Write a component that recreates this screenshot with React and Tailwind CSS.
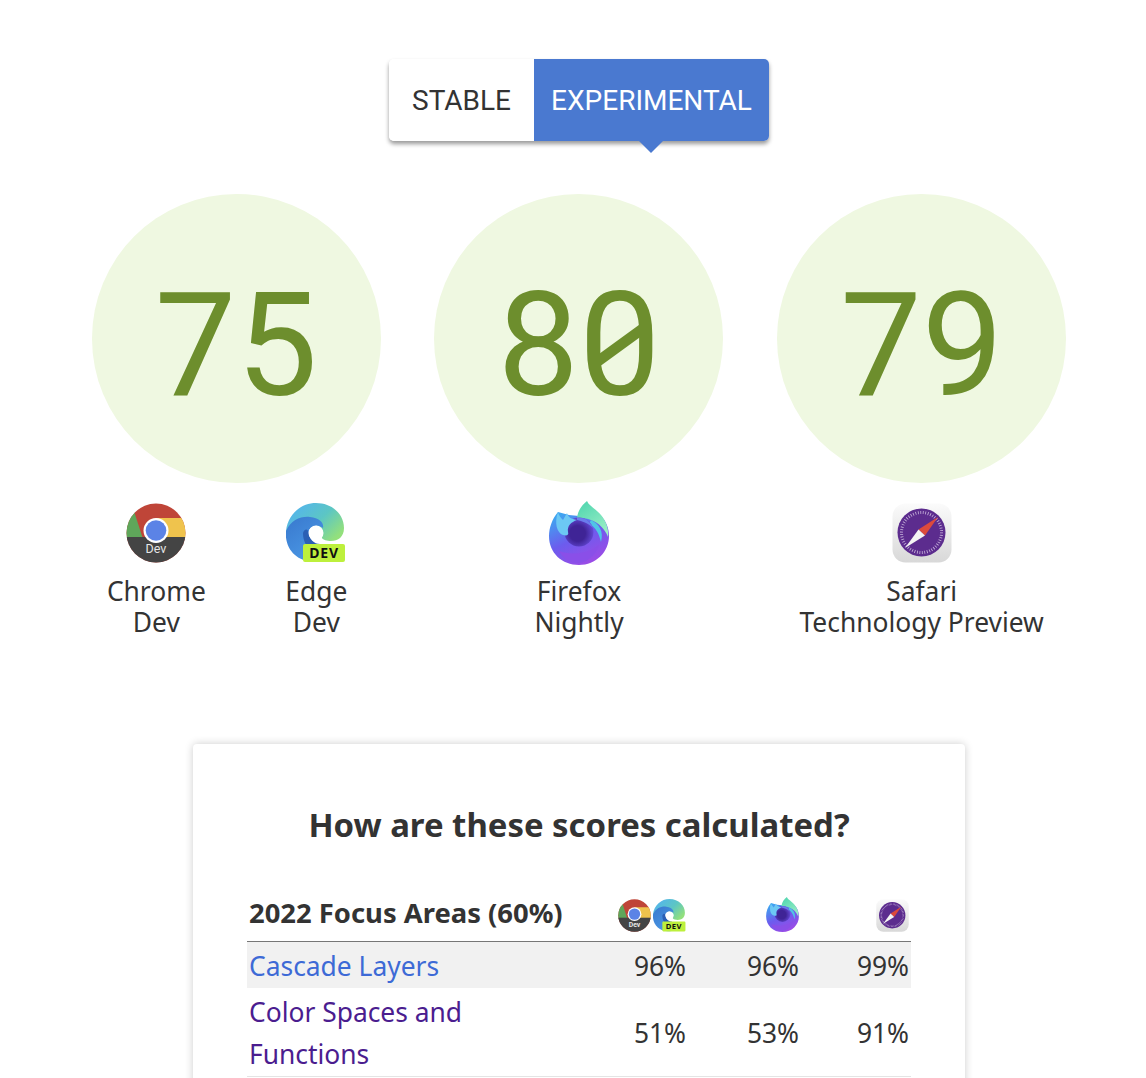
const bodyFont = "font-['Noto_Sans','Open_Sans',sans-serif]";

const ChromeIcon = ({ className }) => (
  <svg viewBox="0 0 60 60" className={className}>
    <defs>
      <clipPath id="chrome-clip"><circle cx="30" cy="30" r="29.5" /></clipPath>
    </defs>
    <g clipPath="url(#chrome-clip)">
      <rect width="60" height="60" fill="#bf4538" />
      <path d="M6 2 L-2 12 L0 36 L17 36 Z" fill="#5fa65a" />
      <path d="M30 15 L60 15 L60 36 L40 36 Z" fill="#efc34d" />
      <rect y="34" width="60" height="26" fill="#444444" />
    </g>
    <circle cx="30" cy="27.5" r="12.5" fill="#ffffff" />
    <circle cx="30" cy="27.5" r="10.3" fill="#5b83e6" />
    <text x="30" y="50" textAnchor="middle" fontSize="12.5" fontFamily="Roboto, sans-serif" fill="#e6e6e6">Dev</text>
  </svg>
);

const EdgeIcon = ({ className }) => (
  <svg viewBox="0 0 60 60" className={className}>
    <defs>
      <linearGradient id="edge-top" x1="0.1" y1="0.1" x2="1" y2="0.7">
        <stop offset="0" stopColor="#54b4ee" />
        <stop offset="0.55" stopColor="#5cc6c4" />
        <stop offset="1" stopColor="#93e07c" />
      </linearGradient>
      <linearGradient id="edge-low" x1="0.2" y1="0" x2="0.8" y2="1">
        <stop offset="0" stopColor="#3a7bd0" />
        <stop offset="1" stopColor="#4c9ae6" />
      </linearGradient>
    </defs>
    <path d="M0 28 C2 11 15 0 30 0 C47 0 58 12 58 25 C58 34 52 38 45 38 C41 38 37 37 36 35 C35 33 37 31 37 28 L30 22 L10 30 Z" fill="url(#edge-top)" />
    <path d="M0 28 C5 17 15 13 24 14 C34 15 38 20 37 25 C30 20 22 24 22 32 C22 40 27 46 34 47 L34 58 C14 62 -2 48 0 28 Z" fill="url(#edge-low)" />
    <path d="M17 30 C17 38 20 44 27 47 L34 47 L34 41 C28 41 23 36 23 30 C22 26 19 25 17 30 Z" fill="#2b5fb4" />
    <circle cx="30" cy="30" r="7.5" fill="#ffffff" />
    <rect x="17" y="41" width="42" height="18" rx="2" fill="#bdf03c" />
    <text x="38" y="55" textAnchor="middle" fontSize="14" fontWeight="700" letterSpacing="0.8" fontFamily="'Noto Sans', sans-serif" fill="#111111">DEV</text>
  </svg>
);

const FirefoxIcon = ({ className }) => (
  <svg viewBox="0 0 60 64" className={className}>
    <defs>
      <linearGradient id="fx-body" x1="0.1" y1="0.1" x2="0.6" y2="1">
        <stop offset="0" stopColor="#3fa4f0" />
        <stop offset="0.5" stopColor="#6c5cee" />
        <stop offset="1" stopColor="#9a4ce6" />
      </linearGradient>
      <linearGradient id="fx-flame" x1="0.2" y1="0" x2="0.8" y2="1">
        <stop offset="0" stopColor="#52d6b0" />
        <stop offset="1" stopColor="#9ef0c6" />
      </linearGradient>
      <radialGradient id="fx-globe" cx="0.45" cy="0.55" r="0.6">
        <stop offset="0.45" stopColor="#3f2496" />
        <stop offset="1" stopColor="#6a4fe0" />
      </radialGradient>
    </defs>
    <path d="M9 11 C3 18 0 27 0 35 C0 52 13 64 30 64 C47 64 60 51 60 35 C60 27 57 20 52 15 L40 16 L20 14 Z" fill="url(#fx-body)" />
    <path d="M28 17 C29 9 33 4 38 0 C40 5 47 8 52 14 C57 20 60 28 59 36 C56 28 50 22 42 19 C37 17 32 17 28 17 Z" fill="url(#fx-flame)" />
    <path d="M42 19 C50 23 55 30 52 41 C50 33 47 26 40 23 Z" fill="#4fc5e6" />
    <circle cx="30" cy="31" r="14.5" fill="url(#fx-globe)" />
    <path d="M9 11 C10 15 12 17 14 19 L18 12 C19 16 22 18 28 19 C22 21 18 25 19 31 C20 34 18 35 14 34 C8 32 5 22 9 11 Z" fill="#6cc8f4" />
    <path d="M28 17 C34 16 41 19 44 27 C39 22 33 20 28 19 Z" fill="#6a7cec" />
    <path d="M10 50 C20 54 38 54 50 44 C46 56 36 62 28 62 C20 62 14 57 10 50 Z" fill="#8a4fe8" />
  </svg>
);

const SafariIcon = ({ className }) => (
  <svg viewBox="0 0 60 60" className={className}>
    <defs>
      <linearGradient id="safari-box" x1="0" y1="0" x2="0" y2="1">
        <stop offset="0" stopColor="#fbfbfb" />
        <stop offset="1" stopColor="#d8d8d8" />
      </linearGradient>
    </defs>
    <rect x="0.5" y="0.5" width="59" height="59" rx="13" fill="url(#safari-box)" />
    <circle cx="29.5" cy="29.5" r="24" fill="#5c2c8e" />
    <circle cx="29.5" cy="29.5" r="20" fill="none" stroke="#c9b6dc" strokeWidth="3" strokeDasharray="0.8 1.7" />
    <path d="M46 14 L26.5 26.5 L33 32.5 Z" fill="#dc4a3c" />
    <path d="M13 45 L26.5 26.5 L33 32.5 Z" fill="#f4f4f4" />
  </svg>
);

const ScoreCircle = ({ score }) => (
  <div className="flex h-[289px] w-[289px] items-center justify-center rounded-full bg-[#eff8e1] pt-[14px] font-['Roboto',sans-serif] text-[145px] font-normal leading-none text-[#6d8e2d] tabular-nums">
    {score.split('').map((digit, i) => (
      <span key={i} className="relative">
        {digit}
        {digit === '0' && (
          <svg viewBox="0 0 81 145" className="absolute left-0 top-0 h-[145px] w-[81px]">
            <polygon points="20,81 64,49 64,62 20,94" fill="#6d8e2d" />
          </svg>
        )}
      </span>
    ))}
  </div>
);

const BrowserLabel = ({ icon, children, className }) => (
  <div className={`flex flex-col items-center ${className || ''}`}>
    <div className="flex h-[60px] items-center">{icon}</div>
    <div className="mt-[13px] text-center text-[26.4px] leading-[31px]">{children}</div>
  </div>
);

const focusAreas = [
  { name: 'Cascade Layers', scores: ['96%', '96%', '99%'], color: 'text-[#3d6ad6]', row: 'bg-[#f1f1f1]' },
  { name: 'Color Spaces and Functions', scores: ['51%', '53%', '91%'], color: 'text-[#4b1d8f]', row: 'border-b border-[#e4e4e4]' },
];

export default function App() {
  return (
    <div className={`h-[1078px] overflow-hidden bg-white pl-[12px] pt-[59px] text-[#333333] ${bodyFont}`}>
      <div className="flex justify-center">
        <div className="relative flex h-[82px] w-[380px] rounded-[5px] font-['Roboto',sans-serif] text-[28px] shadow-[0_3px_4px_rgba(0,0,0,0.4)]">
          <div className="flex w-[145px] items-center justify-center rounded-l-[5px] bg-white pt-[2px]">STABLE</div>
          <div className="flex w-[235px] items-center justify-center rounded-r-[5px] bg-[#4a79d0] pt-[2px] text-white">EXPERIMENTAL</div>
          <div className="absolute left-[250px] top-[82px] h-0 w-0 border-x-[12px] border-t-[12px] border-x-transparent border-t-[#4a79d0]" />
        </div>
      </div>

      <div className="mx-auto mt-[53px] grid w-[1028px] grid-cols-3">
        <div className="flex justify-center"><ScoreCircle score="75" /></div>
        <div className="flex justify-center"><ScoreCircle score="80" /></div>
        <div className="flex justify-center"><ScoreCircle score="79" /></div>
      </div>

      <div className="mx-auto mt-[20px] grid w-[1028px] grid-cols-3">
        <div className="flex justify-center">
          <BrowserLabel className="w-[160px]" icon={<ChromeIcon className="h-[60px] w-[60px]" />}>Chrome<br />Dev</BrowserLabel>
          <BrowserLabel className="w-[160px]" icon={<EdgeIcon className="h-[60px] w-[60px]" />}>Edge<br />Dev</BrowserLabel>
        </div>
        <BrowserLabel icon={<FirefoxIcon className="h-[64px] w-[60px] shrink-0" />}>Firefox<br />Nightly</BrowserLabel>
        <BrowserLabel icon={<SafariIcon className="h-[60px] w-[60px]" />}>Safari<br />Technology Preview</BrowserLabel>
      </div>

      <div className="mx-auto mt-[106px] w-[772px] rounded-[4px] bg-white px-[54px] pb-10 pt-[56px] shadow-[0_0_8px_rgba(0,0,0,0.2)]">
        <h2 className="text-center text-[32.9px] font-bold leading-[50px]">How are these scores calculated?</h2>
        <table className="mt-[42px] w-[664px] table-fixed border-collapse text-[26.4px] leading-[42px]">
          <colgroup>
            <col className="w-[328px]" />
            <col className="w-[113px]" />
            <col className="w-[113px]" />
            <col className="w-[110px]" />
          </colgroup>
          <thead>
            <tr className="border-b border-[#777777]">
              <th className="whitespace-nowrap px-[2px] pb-[7px] text-left text-[27.4px] font-bold">2022 Focus Areas (60%)</th>
              <th className="px-[2px] pb-[9px] align-bottom">
                <div className="flex justify-end gap-[2px]">
                  <ChromeIcon className="h-[33px] w-[33px]" />
                  <EdgeIcon className="h-[33px] w-[33px]" />
                </div>
              </th>
              <th className="px-[2px] pb-[9px] align-bottom">
                <div className="flex justify-end"><FirefoxIcon className="h-[35px] w-[33px]" /></div>
              </th>
              <th className="px-[2px] pb-[9px] align-bottom">
                <div className="flex justify-end"><SafariIcon className="h-[33px] w-[33px]" /></div>
              </th>
            </tr>
          </thead>
          <tbody>
            {focusAreas.map((area) => (
              <tr key={area.name} className={area.row}>
                <td className={`px-[2px] pb-[1px] pt-[3px] ${area.color}`}>{area.name}</td>
                {area.scores.map((score, i) => (
                  <td key={i} className="px-[2px] pb-[1px] pt-[3px] text-right">{score}</td>
                ))}
              </tr>
            ))}
          </tbody>
        </table>
      </div>
    </div>
  );
}
